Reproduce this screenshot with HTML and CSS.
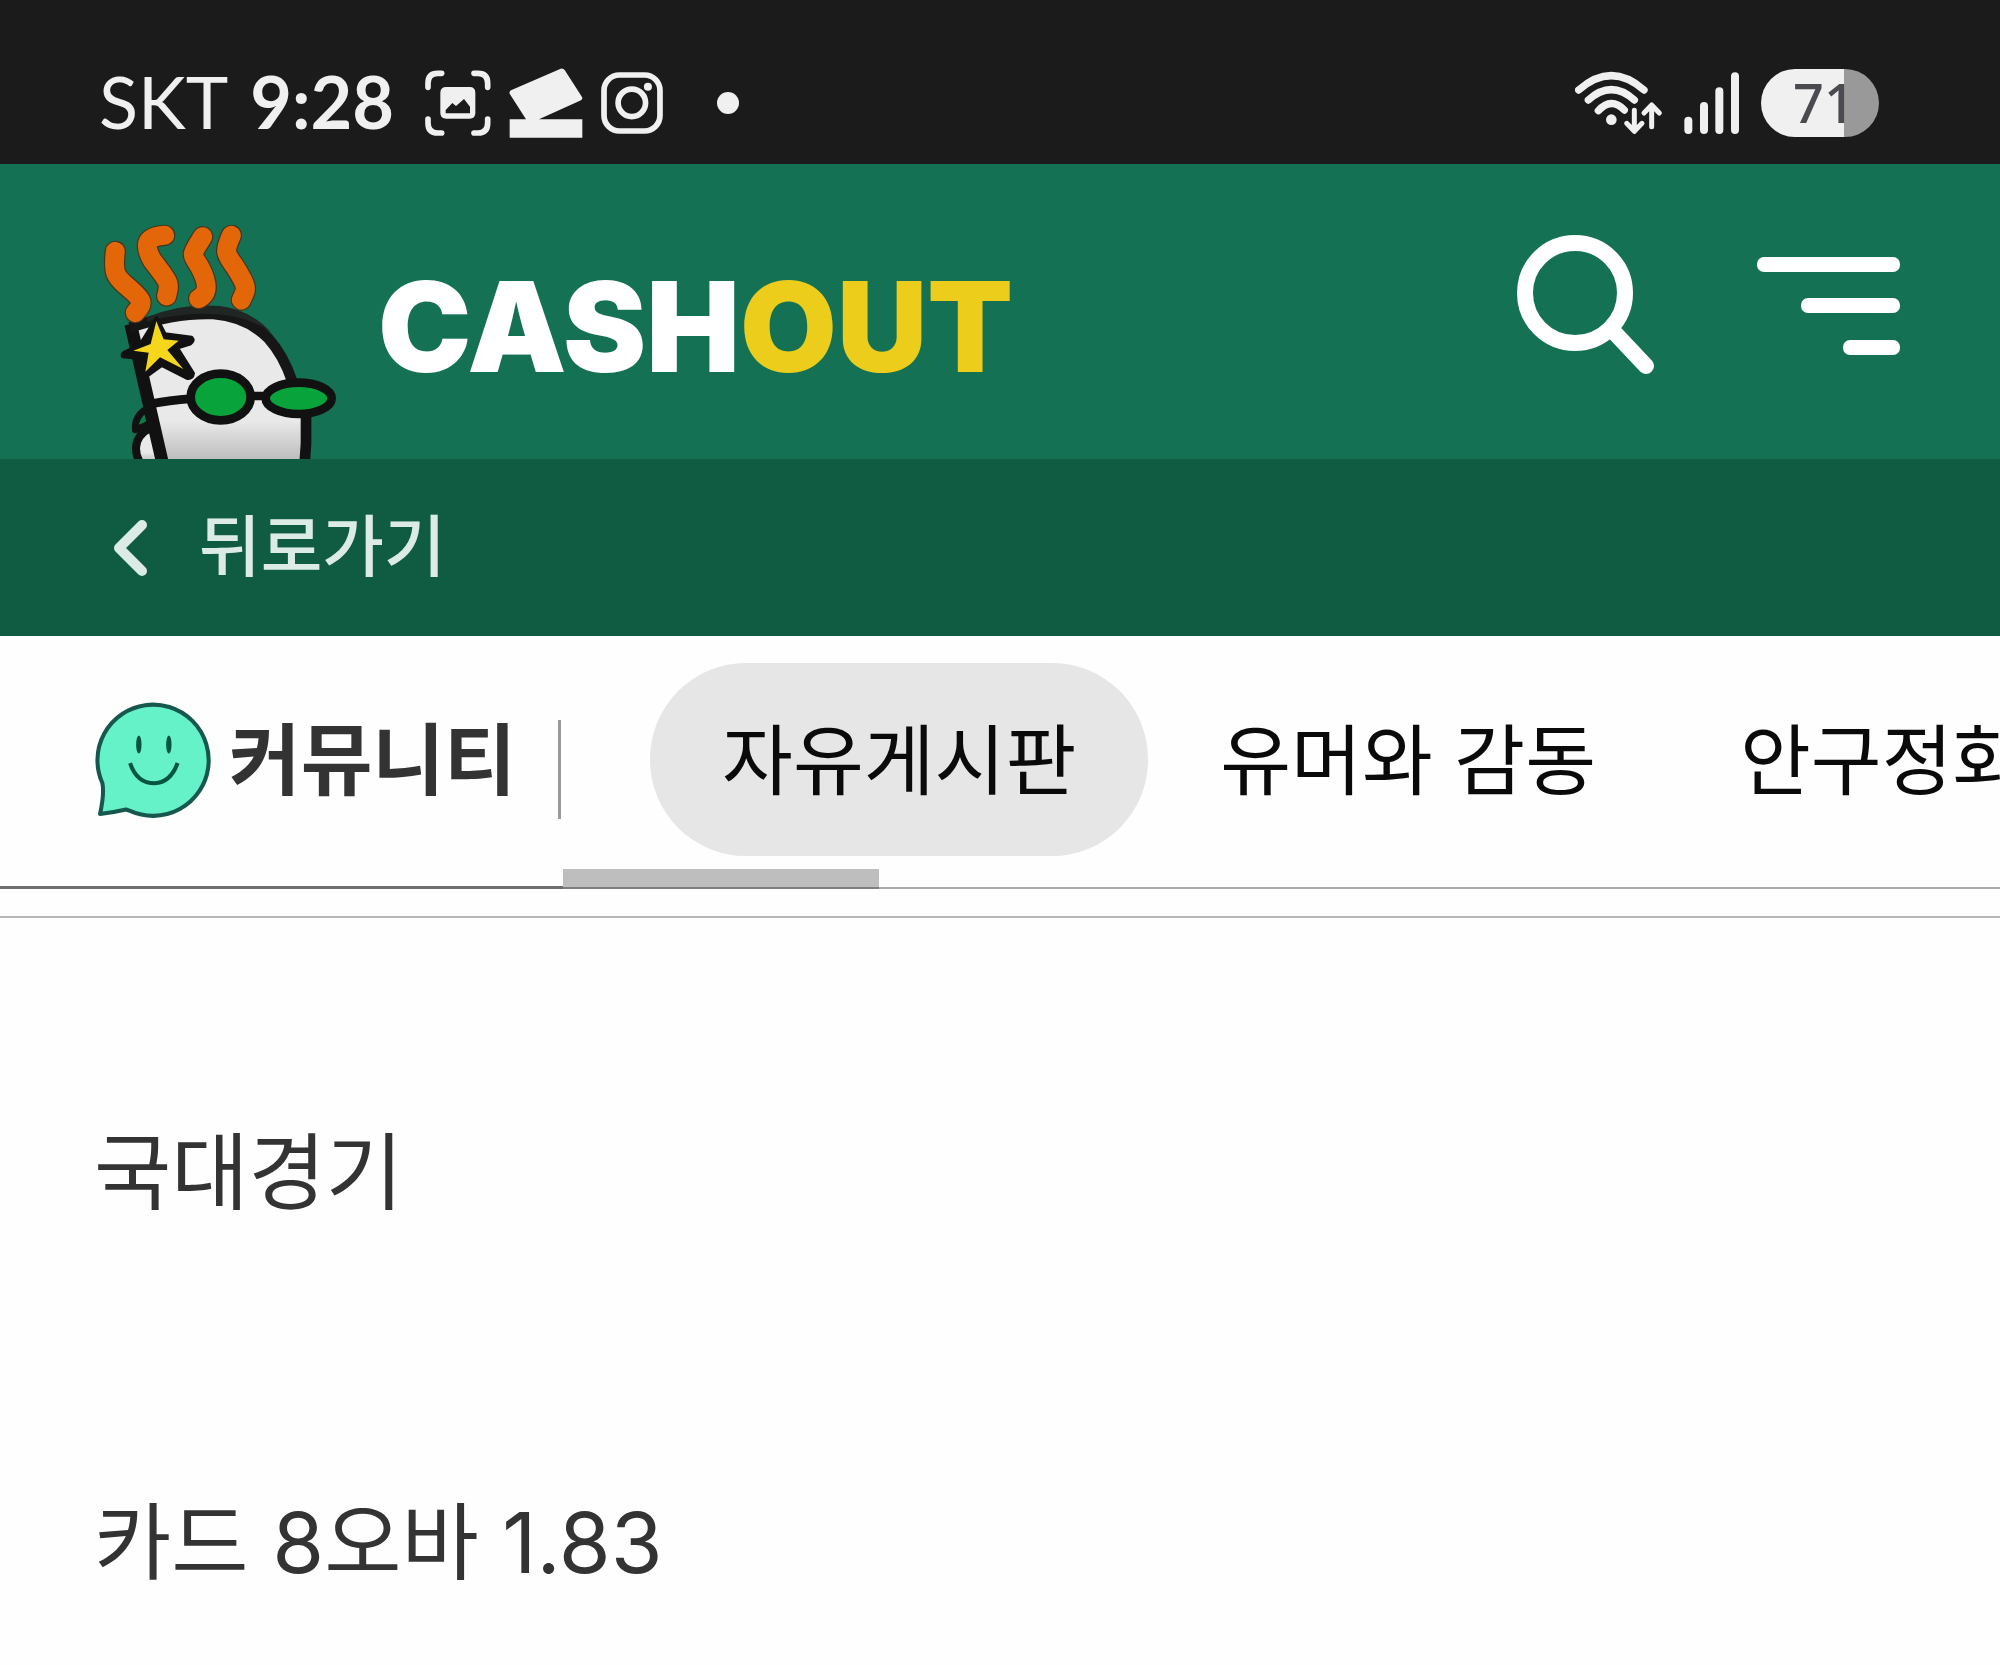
FILE: index.html
```html
<!DOCTYPE html>
<html lang="ko">
<head>
  <meta charset="UTF-8" />
  <meta name="viewport" content="width=device-width, initial-scale=1" />
  <title>CASHOUT - 자유게시판</title>
  <link rel="stylesheet" href="styles.css">
</head>
<body>
  <div class="status-bar">
    <div class="status-left">
      <span class="carrier">SKT</span>
      <span class="clock">9:28</span>
      <div class="status-icons">
        <svg width="66" height="66" viewBox="46 64 198 198" fill="none" stroke="#f0f0f0" stroke-width="17" stroke-linecap="round">
          <path d="M55 116V104Q55 74 84 74H96M193 74H205Q234 74 234 104V116M234 211V223Q234 253 205 253H193M96 253H84Q55 253 55 223V211" />
          <path fill="#f0f0f0" stroke="none" fill-rule="evenodd" d="M110 115H180Q197 115 197 132V193Q197 210 180 210H110Q92 210 92 193V132Q92 115 110 115ZM108 194H181V174L163 151L139 172L128 163L108 184Z" />
        </svg>
        <svg width="74" height="70" viewBox="296 57 220 210" fill="#f0f0f0">
          <path d="M301 124L450 59Q457 57 462 63L514 144Q517 150 511 154L385 211H515V266H297V211H346L297 134Q295 127 301 124Z" />
        </svg>
        <svg width="62" height="62" viewBox="575 71 185 185" fill="none" stroke="#f0f0f0" stroke-width="17">
          <rect x="584" y="80" width="167" height="167" rx="46" />
          <circle cx="667" cy="163" r="41" />
          <circle cx="715" cy="115" r="12" fill="#f0f0f0" stroke="none" />
        </svg>
      </div>
      <span class="dot"></span>
    </div>
    <div class="status-right">
      <svg width="88" height="64" viewBox="76 64 264 192" fill="none" stroke="#f0f0f0" stroke-linecap="round" stroke-linejoin="round">
        <path stroke-width="22" d="M87 121Q185 35 283 121M116 151Q185 89 254 151M146 183Q185 141 224 181" />
        <circle cx="185" cy="210" r="16" fill="#f0f0f0" stroke="none" />
        <path stroke-width="15" d="M254 182V243M231 221L254 245L277 221M306 231V169M283 190L306 166L329 190" />
      </svg>
      <svg width="56" height="64" viewBox="398 62 168 192" stroke="#f0f0f0" stroke-width="24" stroke-linecap="round">
        <path d="M411 211V239M458 167V239M504 123V239M551 78V239" />
      </svg>
      <span class="battery">71</span>
    </div>
  </div>

  <header class="header">
    <a class="logo" href="#">
      <!-- mascot -->
      <svg class="mascot" viewBox="60 30 720 717" aria-hidden="true">
        <defs>
          <linearGradient id="face" x1="0" y1="0" x2="0" y2="1">
            <stop offset="0.7" stop-color="#e9e9ea" />
            <stop offset="1" stop-color="#b5b5b5" />
          </linearGradient>
        </defs>
        <path d="M200 596Q162 620 166 660L210 640Z" fill="#0e7f43" stroke="#111" stroke-width="20" stroke-linejoin="round" />
        <path d="M214 652Q168 675 168 715Q168 740 182 760H260" fill="url(#face)" stroke="#111" stroke-width="24" />
        <path d="M156 345Q290 308 400 312Q500 322 560 380Q605 430 632 505L664 600V770H252Z" fill="url(#face)" />
        <path d="M152 342L250 770" fill="none" stroke="#111" stroke-width="38" />
        <path d="M150 352Q290 308 400 312Q500 320 564 384Q610 435 636 512" fill="none" stroke="#161616" stroke-width="32" />
        <path d="M200 322Q300 278 420 288Q510 298 575 368Q500 316 400 312Q300 308 200 335Z" fill="#202624" />
        <path d="M678 600V700L674 760" fill="none" stroke="#111" stroke-width="32" />
        <path d="M210 582Q265 572 335 566M505 558H570" fill="none" stroke="#111" stroke-width="26" />
        <ellipse cx="422" cy="561" rx="90" ry="70" fill="#08a33a" stroke="#111" stroke-width="26" />
        <ellipse cx="656" cy="565" rx="99" ry="47" fill="#08a33a" stroke="#111" stroke-width="26" />
        <path d="M230 324L255 372L335 382Q345 392 330 402L292 414L340 490Q338 508 320 504L245 466L185 510L180 445L128 440Q122 430 140 424L180 404Z" fill="#111" stroke="#111" stroke-width="10" stroke-linejoin="round" />
        <path d="M229 334L251 388L296 392L262 420L310 477L240 442L196 485L206 428L160 422L212 402Z" fill="#f4d71c" />
        <g fill="none" stroke-linecap="round" stroke-linejoin="round">
          <path stroke="#45341c" stroke-width="64" d="M106 124C98 190 108 200 136 225C196 275 190 278 166 308M254 76C198 80 190 102 216 150C270 222 270 215 260 258M368 80C332 140 332 125 360 172C386 222 386 250 356 266M454 76C430 130 438 130 466 172C506 236 500 235 484 270" />
          <path stroke="#e36608" stroke-width="57" d="M106 124C98 190 108 200 136 225C196 275 190 278 166 308M254 76C198 80 190 102 216 150C270 222 270 215 260 258M368 80C332 140 332 125 360 172C386 222 386 250 356 266M454 76C430 130 438 130 466 172C506 236 500 235 484 270" />
        </g>
      </svg>
      <span class="brand">CASH<span class="brand-out">OUT</span></span>
    </a>
    <div class="header-actions">
      <button type="button" aria-label="검색">
        <svg width="138" height="142" viewBox="0 0 138 142" fill="none" stroke="#fff" stroke-width="16">
          <circle cx="58" cy="59" r="50" />
          <path stroke-linecap="round" d="M96 97L129 132" />
        </svg>
      </button>
      <button type="button" aria-label="메뉴">
        <svg width="143" height="142" viewBox="0 0 143 142" fill="#fff">
          <rect x="0" y="23" width="143" height="15" rx="7" />
          <rect x="44" y="64" width="99" height="15" rx="7" />
          <rect x="86" y="106" width="57" height="15" rx="7" />
        </svg>
      </button>
    </div>
  </header>

  <div class="back-bar">
    <a class="back" href="#">
      <svg width="36" height="58" viewBox="0 0 36 58" fill="none" stroke="#dcebe5" stroke-width="10" stroke-linecap="round" stroke-linejoin="round">
        <path d="M30 6L7 29L30 52" />
      </svg>
      <span>뒤로가기</span>
    </a>
  </div>

  <nav class="board-nav">
    <div class="board-title">
      <svg width="118" height="120" viewBox="46 156 350 356" aria-hidden="true">
        <path d="M61 491Q74 430 68 400A165 165 0 1 1 150 482L138 478Q100 487 61 491Z" fill="#66f2c8" stroke="#17584e" stroke-width="12" stroke-linejoin="round" />
        <ellipse cx="176" cy="285" rx="8" ry="27" fill="#07553f" />
        <ellipse cx="265" cy="285" rx="8" ry="27" fill="#07553f" />
        <path d="M150 340Q170 400 223 400Q270 398 291 340" fill="none" stroke="#07553f" stroke-width="12" />
      </svg>
      <h1>커뮤니티</h1>
      <span class="divider"></span>
    </div>
    <div class="board-tabs">
      <a class="tab active" href="#">자유게시판</a>
      <a class="tab" href="#">유머와 감동</a>
      <a class="tab" href="#">안구정화</a>
      <span class="scroll-thumb"></span>
    </div>
  </nav>

  <main class="post">
    <p>국대경기</p>
    <p>카드 8오바 1.83</p>
  </main>
</body>
</html>
```
FILE: styles.css
```css
* {
  box-sizing: border-box;
}
body {
  margin: 0;
  background: #fefefe;
  color: #333;
  font-family: "Noto Sans CJK KR", sans-serif;
  overflow-x: hidden;
}
svg {
  display: block;
  flex: none;
}
a {
  color: inherit;
  text-decoration: none;
}

/* status bar */
.status-bar {
  display: flex;
  justify-content: space-between;
  align-items: center;
  padding: 42px 121px 0 99px;
  height: 164px;
  background: #1b1b1b;
  color: #f0f0f0;
  font-family: Lato, sans-serif;
}
.status-left,
.status-right,
.status-icons {
  display: flex;
  align-items: center;
}
.carrier {
  font-size: 72px;
  line-height: 88px;
  padding-bottom: 4px;
  margin-right: 22px;
}
.clock {
  font-size: 72px;
  font-weight: bold;
  line-height: 88px;
  padding-bottom: 4px;
  margin-right: 31px;
}
.status-icons {
  gap: 18px;
}
.dot {
  width: 22px;
  height: 22px;
  margin-left: 54px;
  border-radius: 50%;
  background: #f0f0f0;
}
.status-right {
  gap: 21px;
}
.battery {
  width: 118px;
  height: 68px;
  padding-left: 32px;
  border-radius: 34px;
  background: linear-gradient(to right, #f0f0f0 70%, #999 70%);
  color: #4a4b50;
  font-family: "Noto Sans", sans-serif;
  font-size: 54px;
  font-weight: 500;
  line-height: 66px;
}

/* header */
.header {
  display: flex;
  justify-content: space-between;
  padding: 0 100px;
  height: 295px;
  background: #147154;
}
.logo {
  display: flex;
  align-items: flex-end;
  gap: 38px;
}
.mascot {
  width: 240px;
  height: 239px;
}
.brand {
  padding-bottom: 54px;
  color: #fff;
  font-family: Inter, sans-serif;
  font-size: 125px;
  font-weight: 900;
  line-height: 156px;
}
.brand-out {
  color: #eccd1b;
}
.header-actions {
  display: flex;
  align-items: flex-start;
  gap: 102px;
  padding-top: 70px;
}
.header-actions button {
  padding: 0;
  border: none;
  background: none;
  cursor: pointer;
}

/* back link */
.back-bar {
  padding: 40px 112px;
  background: #105c43;
}
.back {
  display: flex;
  align-items: center;
  gap: 51px;
  color: #dcebe5;
  font-size: 67px;
  font-weight: 500;
  line-height: 85px;
}
.back span {
  padding-bottom: 12px;
}

/* board tabs */
.board-nav {
  display: flex;
  height: 253px;
  font-size: 77px;
  white-space: nowrap;
}
.board-title {
  display: flex;
  flex: none;
  align-items: center;
  gap: 16px;
  padding-left: 95px;
  border-bottom: 3px solid #6e6e6e;
}
.board-title h1 {
  margin: 0;
  padding-bottom: 12px;
  font-size: 78px;
  font-weight: bold;
}
.divider {
  width: 3px;
  height: 99px;
  margin: 16px 2px 0 26px;
  background: #999;
}
.board-tabs {
  position: relative;
  display: flex;
  flex: 1;
  align-items: flex-start;
  min-width: 0;
  padding: 27px 0 0 87px;
  border-bottom: 2px solid #aaa;
}
.tab {
  flex: none;
  padding: 36px 72px 44px;
  border-radius: 96px;
  color: #0a0a0a;
  line-height: 113px;
}
.tab.active {
  background: #e6e6e6;
}
.scroll-thumb {
  position: absolute;
  left: 0;
  bottom: -2px;
  width: 316px;
  height: 20px;
  background: rgba(0, 0, 0, 0.25);
}

/* post */
.post {
  margin-top: 27px;
  padding: 193px 94px 0;
  border-top: 2px solid #b5b5b5;
  font-family: Inter, "Noto Sans CJK KR", sans-serif;
  font-size: 84px;
  line-height: 124px;
}
.post p {
  margin: 0 0 246px;
}
.post p:last-child {
  margin-bottom: 0;
}
```
